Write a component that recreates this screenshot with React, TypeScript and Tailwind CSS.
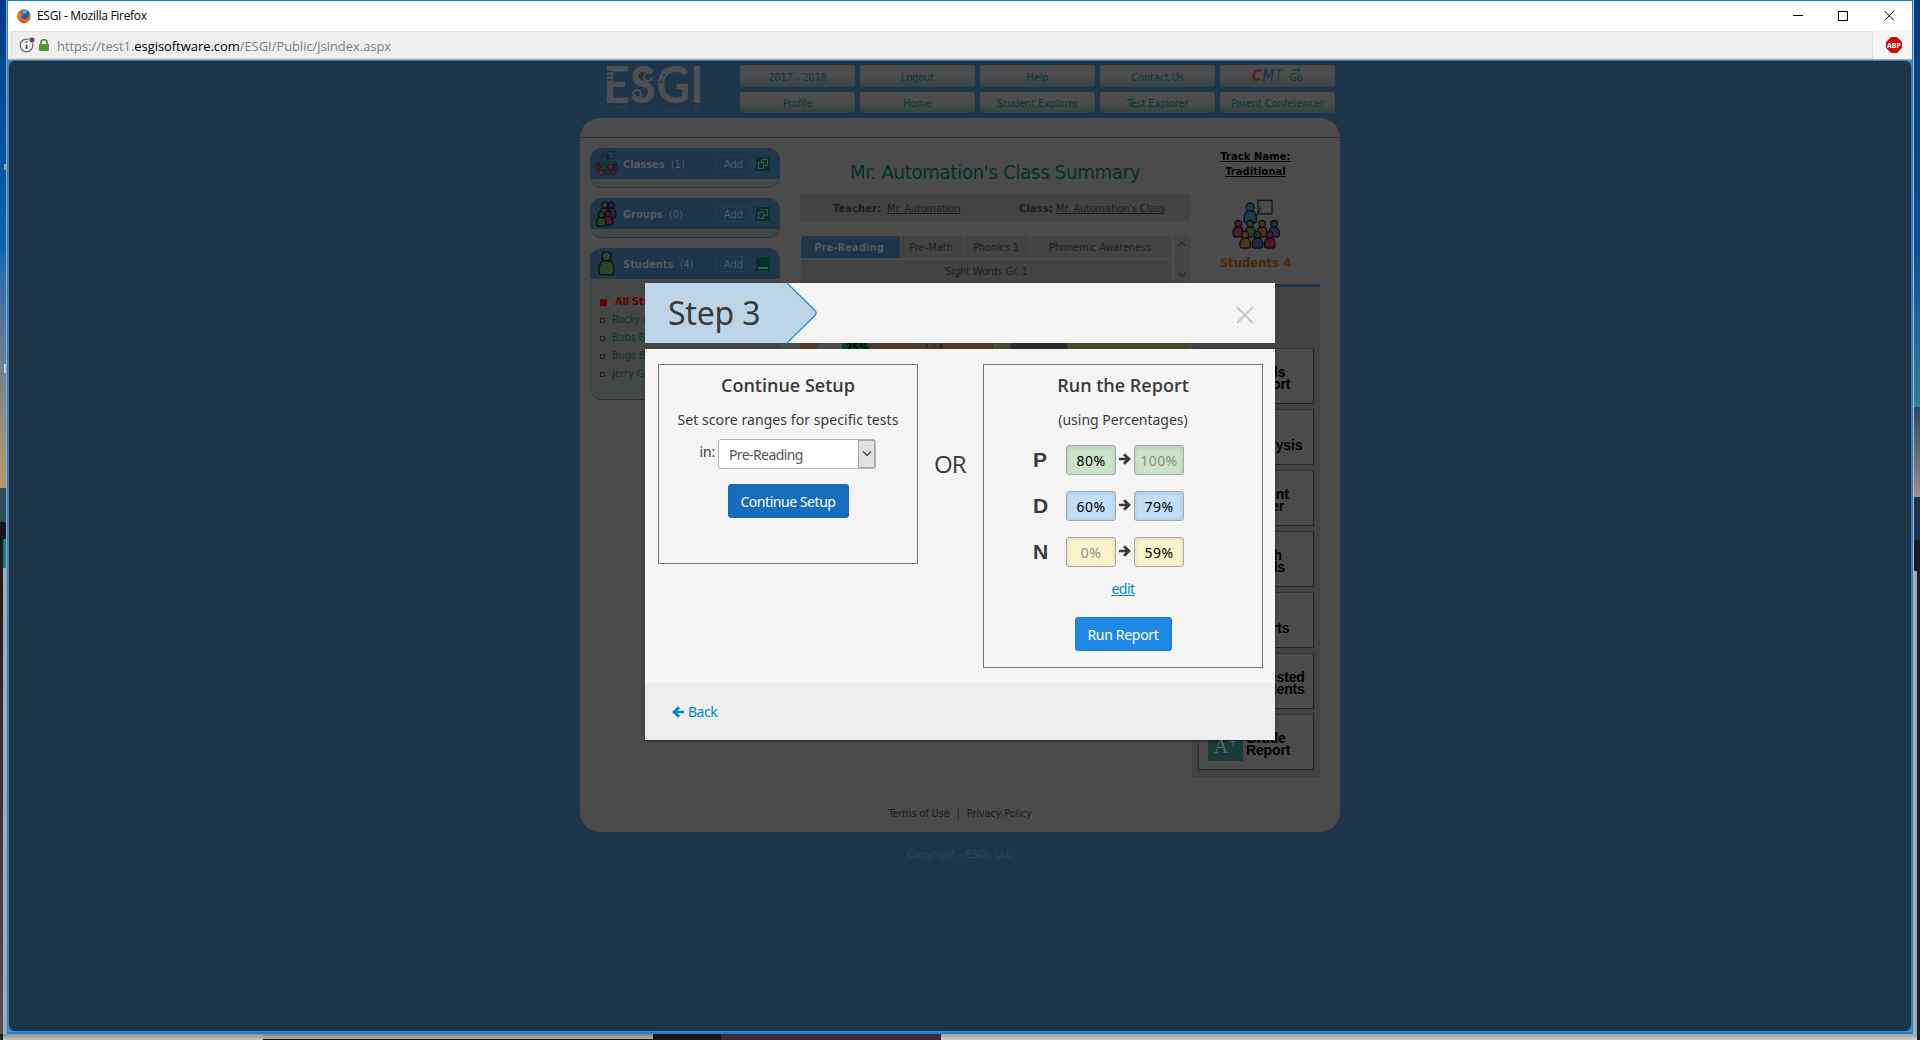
import React from "react";

type PersonProps = { x: number; y: number; h: number; w: number; r: number; fill: string; line?: string; sw?: number };

function Person({ x, y, h, w, r, fill, line = "#0d0d0d", sw = 4 }: PersonProps) {
  const top = y + r;
  const b = top + h;
  const hw = w / 2;
  return (
    <g fill={fill} stroke={line} strokeWidth={sw}>
      <path
        d={`M${x - hw} ${b - 8} C${x - hw} ${top + 2} ${x - hw / 2} ${top - 2} ${x} ${top - 2} C${x + hw / 2} ${top - 2} ${x + hw} ${top + 2} ${x + hw} ${b - 8} Q${x + hw - 1} ${b} ${x + hw - 8} ${b} H${x - hw + 8} Q${x - hw + 1} ${b} ${x - hw} ${b - 8} Z`}
      />
      <circle cx={x} cy={y} r={r} />
    </g>
  );
}

const RED = "#4a1a30";
const GREEN = "#24401f";
const ORANGE = "#52301c";
const NAVY = "#24284a";
const TEAL = "#1d3c50";

function ClassroomIcon({ size, line, sw }: { size: string; line: string; sw: number }) {
  const p = { line, sw, h: 30, w: 32, r: 10 };
  return (
    <svg viewBox="-2 -2 148 152" className={size}>
      <rect x="77" y="1" width="42" height="41" fill="none" stroke={line} strokeWidth="3.5" />
      <path d="M87 22 L70 50" stroke={line} strokeWidth="3.5" />
      <Person {...p} x={53} y={21} h={37} w={38} r={12} fill={TEAL} />
      <Person {...p} x={17} y={72} fill={RED} />
      <Person {...p} x={53} y={72} fill={GREEN} />
      <Person {...p} x={89} y={72} fill={ORANGE} />
      <Person {...p} x={125} y={72} fill={NAVY} />
      <Person {...p} x={38} y={105} fill={ORANGE} />
      <Person {...p} x={75} y={105} fill={NAVY} />
      <Person {...p} x={112} y={105} fill={RED} />
    </svg>
  );
}

function GroupIcon() {
  return (
    <svg viewBox="0 0 64 78" className="h-[26px] w-[21px]">
      <Person x={46} y={12} h={30} w={28} r={9} fill={NAVY} />
      <Person x={27} y={12} h={30} w={28} r={9} fill={ORANGE} />
      <Person x={37} y={38} h={26} w={28} r={9} fill={RED} />
      <Person x={16} y={41} h={26} w={28} r={9} fill={GREEN} />
    </svg>
  );
}

function StudentIcon() {
  return (
    <svg viewBox="0 0 52 76" className="h-[25px] w-[17px]">
      <Person x={26} y={16} h={42} w={46} r={14} fill="#2b4729" sw={4} />
    </svg>
  );
}

function Arrow({ className }: { className: string }) {
  return (
    <svg viewBox="0 0 12 12" className={className} fill="currentColor">
      <path d="M0 4.700h6.600L4 2.200 5.900.2 12 6 5.900 11.800 4 9.800 6.600 7.300H0z" />
    </svg>
  );
}

function SquareButton({ kind }: { kind: "window" | "minimize" }) {
  return (
    <svg viewBox="0 0 16 16" className="h-4 w-4">
      <rect width="16" height="16" rx="1" fill="#06302c" />
      <rect x="0.5" y="0.5" width="15" height="15" rx="1" fill="none" stroke="#1f3d3b" strokeDasharray="13 2" />
      {kind === "window" ? (
        <g fill="#06302c" stroke="#3f5350">
          <path d="M6.5 3.5 H12.5 V9.5 H9" fill="none" />
          <path d="M6.5 3.5 V6" fill="none" />
          <rect x="3.5" y="6.5" width="5" height="6" />
        </g>
      ) : (
        <rect x="3" y="11" width="10" height="2" fill="#3c5b57" />
      )}
    </svg>
  );
}

function SideCard(props: { title: string; count: number; icon: React.ReactNode; kind: "window" | "minimize"; children?: React.ReactNode }) {
  return (
    <section className="overflow-hidden rounded-[12px] border-b border-[#1f3549] bg-[#454745]">
      <header className="flex h-[31px] items-center bg-[#1f3549] pr-[9px] text-[11px] leading-[14px] text-[#565b5e]">
        <span className="flex w-[33px] items-center justify-center">{props.icon}</span>
        <span className="mt-[2px] font-bold">{props.title}</span>
        <span className="mt-[2px] ml-1.5">({props.count})</span>
        <span className="ml-auto mr-1 flex h-4 w-[35px] items-center justify-center rounded-[2px] border border-[#263f4c] pt-[2px] text-[#4c5b65]">Add</span>
        <SquareButton kind={props.kind} />
      </header>
      {props.children ?? <div className="h-2" />}
    </section>
  );
}

function Logo() {
  return (
    <svg viewBox="0 0 100 53" className="h-[53px] w-[100px] overflow-visible">
      <defs>
        <linearGradient id="fade" x1="0" y1="0" x2="0" y2="1">
          <stop offset="0" stopColor="#1f3549" stopOpacity="0.75" />
          <stop offset="1" stopColor="#1f3549" />
        </linearGradient>
      </defs>
      <text x="-3" y="38" textLength="101" lengthAdjust="spacingAndGlyphs" fill="#4e4f50" fontFamily="Lato" fontWeight="700" fontSize="52">
        ESGI
      </text>
      <g fill="none" stroke="#4e4f50" strokeWidth="2.2">
        <path d="M46 12 a4 4 0 1 1 -4 -4" />
        <path d="M27 29 a4 4 0 1 1 4 4" />
      </g>
      <g fill="#1f3549">
        <circle cx="55" cy="17" r="1.3" />
        <circle cx="58" cy="10" r="1.3" />
        <path d="M0 6h6v1.500H0zM0 10h6v1.500H0zM0 14h6v1.500H0z" />
      </g>
      <path d="M4 41h17v3H4v6h-3v-9zM29 44q8-5 15 0v8h-3v-6q-5-3-9 0zM55 46q10-8 23 0v6h-4v-4q-7-5-14 0zM88 41h6v11h-5z" fill="#4e4f50" />
      <rect y="40.500" width="100" height="12" fill="url(#fade)" />
    </svg>
  );
}

const navCell =
  "flex items-center justify-center rounded-[3px] bg-linear-to-b from-[#4c4c4c] from-50% to-[#33433f] text-[11px] leading-[14px] tracking-[-0.15px] text-[#073a37]";

function Nav() {
  return (
    <nav className="grid grid-cols-[repeat(5,115px)] grid-rows-[22px_21px] gap-[5px]">
      {["2017 - 2018", "Logout", "Help", "Contact Us"].map((t) => (
        <div key={t} className={navCell}>
          <span className="mt-[3px]">{t}</span>
        </div>
      ))}
      <div className={navCell}>
        <span className="text-[15px] tracking-[0.6px] italic">
          <span className="font-bold text-[#5f1b20]">C</span>
          <span className="text-[#1c2c55]">M</span>
          <span className="text-[#1f4224]">T</span>
        </span>
        <span className="relative mt-[3px] ml-[6px]">
          Go
          <svg viewBox="0 0 10 4" className="absolute -top-[3px] left-px h-1 w-[10px]">
            <path d="M0 2h9M7 .5l2 1.500-2 1.500" stroke="#073a37" fill="none" />
          </svg>
        </span>
      </div>
      {["Profile", "Home", "Student Explorer", "Test Explorer", "Parent Conferencer"].map((t) => (
        <div key={t} className={navCell}>
          <span className="mt-[2px]">{t}</span>
        </div>
      ))}
    </nav>
  );
}

function Sidebar() {
  return (
    <aside className="flex w-[190px] flex-col gap-[10px] pt-[10px]">
      <SideCard title="Classes" count={1} kind="window" icon={<ClassroomIcon size="h-[25px] w-[24px]" line="#10161d" sw={3} />} />
      <SideCard title="Groups" count={0} kind="window" icon={<GroupIcon />} />
      <SideCard title="Students" count={4} kind="minimize" icon={<StudentIcon />}>
        <ul className="h-[120px] pt-[14px] pl-[10px] text-[11px] leading-[18px] tracking-[-0.2px] text-[#0a3735]">
          <li className="flex items-center font-bold text-[#5c0507]">
            <span className="mr-2 h-[7px] w-[7px] bg-[#5c0507]" />
            All Students
          </li>
          {["Rocky Balboa", "Babs Bunny", "Bugs Bunny", "Jerry Garcia"].map((n) => (
            <li key={n} className="flex items-center">
              <span className="mr-[7px] h-[5px] w-[5px] border border-[#202020]" />
              {n}
            </li>
          ))}
        </ul>
      </SideCard>
    </aside>
  );
}

function Chevron({ d }: { d: string }) {
  return (
    <svg viewBox="0 0 8 6" className="h-[6px] w-2">
      <path d={d} fill="none" stroke="#303030" strokeWidth="1.700" />
    </svg>
  );
}

function Summary() {
  const tab = "flex h-[22px] items-center justify-center rounded-t-[3px] bg-[#434343] pt-[2px]";
  return (
    <main className="ml-5 flex w-[390px] flex-col text-[11px] leading-[14px] tracking-[-0.16px] text-[#1f1f1f]">
      <h1 className="mt-[20px] text-center text-[20px] leading-[28px] tracking-[-0.24px] text-[#06302e]">Mr. Automation's Class Summary</h1>
      <div className="mt-2 flex h-[27px] items-center bg-[#434343] pt-[2px] pl-[33px]">
        <b className="w-[54px] tracking-[0.15px]">Teacher:</b>
        <span className="w-[132px] underline">Mr. Automation</span>
        <b className="w-[37px] tracking-[0.15px]">Class:</b>
        <span className="underline">Mr. Automation's Class</span>
      </div>
      <div className="mt-[15px] flex">
        <div className="ml-px flex w-[371px] flex-col gap-[2px]">
          <div className="flex gap-px">
            <div className="flex h-[22px] w-[99px] items-center justify-center rounded-t-[3px] bg-[#1f3549] pt-[2px] pr-[3px] font-bold tracking-[0.1px] text-[#565b5e]">Pre-Reading</div>
            <div className={tab + " w-[63px] pr-[3px] tracking-[0px]"}>Pre-Math</div>
            <div className={tab + " w-[65px] pr-[3px]"}>Phonics 1</div>
            <div className={tab + " w-[141px] pr-[3px]"}>Phonemic Awareness</div>
          </div>
          <div className="flex h-[24px] items-center justify-center rounded-t-[3px] bg-[#434343]">Sight Words Gr. 1</div>
        </div>
        <div className="ml-[2px] flex h-[48px] w-4 flex-col items-center justify-between bg-[#454545] pt-[5px] pb-[6px]">
          <Chevron d="M0.500 5 L4 1.500 L7.500 5" />
          <Chevron d="M0.500 1 L4 4.500 L7.500 1" />
        </div>
      </div>
      <div className="mt-[50px] flex h-[40px] gap-[2px] text-[10px]">
        <div className="flex w-[194px] bg-[#4e3a2b]">
          <div className="w-[14px]" />
          <div className="w-[28px] rounded-tl-[24px] bg-[#4b4b4b]" />
          <div className="w-[30px] rounded-tr-[24px] bg-[#06401f] pt-[8px] text-center leading-[12px] font-bold text-black">25%</div>
          <div className="ml-[52px] pt-[9px] leading-[12px]">1 / 4</div>
        </div>
        <div className="flex w-[194px] bg-[#484a29]">
          <div className="ml-[14px] w-[58px] rounded-t-[16px] bg-[#2b2b2b]" />
        </div>
      </div>
    </main>
  );
}

const reports: [string, string][] = [
  ["Totals", "Report"],
  ["Item", "Analysis"],
  ["Parent", "Letter"],
  ["Flash", "Cards"],
  ["Pie", "Charts"],
  ["Untested", "Students"],
  ["Grade", "Report"],
];

function RightColumn() {
  return (
    <aside className="ml-[2px] flex w-[128px] flex-col">
      <div className="mt-[11px] pr-px text-center text-[11px] leading-[15px] font-bold tracking-[0.1px] text-black">
        <div className="underline">Track Name:</div>
        <div className="underline">Traditional</div>
      </div>
      <div className="mt-[20px] flex justify-center">
        <ClassroomIcon size="h-[51px] w-[49px]" line="#101010" sw={4} />
      </div>
      <div className="mt-[4px] pr-px text-center text-[13px] leading-[18px] font-bold text-[#4c2a05]">Students 4</div>
      <div className="mt-[12px] h-[493px] border-t-[3px] border-[#1f3549] bg-[#434343] pt-[61px] pl-[6px]">
        <div className="flex flex-col gap-[5px]">
          {reports.map(([a, b]) => (
            <div key={a} className="flex h-[56px] w-[116px] border border-t-[#333] border-r-[#242424] border-b-[#242424] border-l-[#333] bg-[#4b4b4b]">
              <div className="flex w-[46px] shrink-0 items-start justify-end pt-[11px] pr-[2px]">
                {a === "Grade" && (
                  <div className="flex h-[35px] w-[35px] items-center justify-center bg-[#1a3b37] pt-1 font-['Liberation_Serif',serif] text-[20px] text-[#626b69]">
                    <span>A</span>
                    <span className="-mt-2 text-[16px]">+</span>
                  </div>
                )}
              </div>
              <div className="pt-[17px] pl-px font-['Liberation_Sans',sans-serif] text-[14px] leading-[12.300px] font-bold tracking-[-0.15px] text-black">
                {a}
                <br />
                {b}
              </div>
            </div>
          ))}
        </div>
      </div>
    </aside>
  );
}

const input = "flex h-[30px] w-[50px] items-center justify-center rounded-[3px] border border-[#a9adaa] pt-[2px] text-[14px] tracking-[0.4px] inset-shadow-[0_1px_4px_rgba(0,0,0,0.12)]";

function ScoreRow(props: { label: string; from: string; to: string; fromClass: string; toClass: string }) {
  return (
    <div className="flex h-[30px] items-center pl-[47px]">
      <span className="w-[35px] pl-[2px] font-['Liberation_Sans',sans-serif] text-[21px] leading-[24px] font-bold">{props.label}</span>
      <div className={input + " " + props.fromClass}>{props.from}</div>
      <Arrow className="mx-[3px] mb-[3px] h-3 w-3" />
      <div className={input + " " + props.toClass}>{props.to}</div>
    </div>
  );
}

function Dialog() {
  return (
    <div role="dialog" className="absolute top-[223px] left-[637px] w-[630px] font-['Noto_Sans',sans-serif] text-[14px] leading-5 text-[#3a3a3a]">
      <header className="flex h-[60px] items-center justify-between bg-[#f5f5f5] pr-[21px]">
        <div className="relative flex h-full w-[173px] items-center pl-[23px]">
          <svg viewBox="0 0 173 60" className="absolute inset-0 h-[60px] w-[173px]">
            <path d="M0 0H142L170.500 28Q171.800 30 170.500 32L142 60H0Z" fill="#bcd4e6" />
            <path d="M142 0L170.500 28Q171.800 30 170.500 32L142 60" fill="none" stroke="#1a8fd0" strokeWidth="1.200" />
          </svg>
          <h2 className="relative text-[32px] leading-[40px] tracking-[-0.2px]">Step 3</h2>
        </div>
        <svg viewBox="0 0 18 18" className="mt-[4px] h-[18px] w-[18px]">
          <path d="M1 1L17 17M17 1L1 17" stroke="#c9c9c9" strokeWidth="2.200" />
        </svg>
      </header>
      <div className="mt-[6px] shadow-[0_1px_2px_rgba(0,0,0,0.5)]">
        <div className="flex h-[334px] items-start bg-[#f5f5f5] pt-[15px] pr-[12px] pl-[13px]">
          <section className="flex h-[200px] w-[260px] shrink-0 flex-col items-center border border-[#777]">
            <h3 className="mt-[8px] font-['Open_Sans'] text-[18px] leading-6 font-semibold">Continue Setup</h3>
            <p className="mt-[13px] tracking-[0.07px]">Set score ranges for specific tests</p>
            <div className="mt-[9px] flex w-full">
              <span className="mt-[3px] w-[59px] pr-[3px] text-right tracking-[-0.2px]">in:</span>
              <div className="flex h-[30px] w-[158px] rounded-[3px] border border-[#b5b5b5] bg-white">
                <span className="mt-[5px] grow pl-[10px] tracking-[-0.6px] text-[#555]">Pre-Reading</span>
                <span className="flex w-[17px] items-center justify-center border border-[#a8a8a8] bg-[#e1e1e1]">
                  <svg viewBox="0 0 10 6" className="h-[6px] w-[10px]">
                    <path d="M1 .5L5 4.500L9 .5" fill="none" stroke="#444" strokeWidth="1.300" />
                  </svg>
                </span>
              </div>
            </div>
            <div className="mt-[15px] flex h-[34px] w-[121px] items-center justify-center rounded-[3px] border border-[#1668b4] bg-[#176dbd] pt-[2px] tracking-[-0.45px] text-white">Continue Setup</div>
          </section>
          <div className="mt-[83px] ml-[16px] w-[49px] shrink-0 font-['Open_Sans'] text-[24px] leading-[34px] tracking-[-1px]">OR</div>
          <section className="flex h-[304px] w-[280px] shrink-0 flex-col items-center border border-[#777]">
            <h3 className="mt-[8px] font-['Open_Sans'] text-[18px] leading-6 font-semibold">Run the Report</h3>
            <p className="mt-[13px]">(using Percentages)</p>
            <div className="mt-[15px] flex w-full flex-col gap-4">
              <ScoreRow label="P" from="80%" to="100%" fromClass="bg-[#cce3cc] text-black" toClass="bg-[#cce3cc] text-[#8a8f8a]" />
              <ScoreRow label="D" from="60%" to="79%" fromClass="bg-[#c2def8] text-black" toClass="bg-[#c2def8] text-black" />
              <ScoreRow label="N" from="0%" to="59%" fromClass="bg-[#faf4cb] text-[#8f8d80]" toClass="bg-[#faf4cb] text-black" />
            </div>
            <a className="mt-[12px] tracking-[-0.5px] text-[#0088cc] underline">edit</a>
            <div className="mt-[18px] flex h-[34px] w-[97px] items-center justify-center rounded-[3px] border border-[#1a7bd0] bg-[#1e88e5] pt-[2px] tracking-[-0.3px] text-white">Run Report</div>
          </section>
        </div>
        <footer className="flex h-[57px] items-center bg-[#eee] pl-[27px] tracking-[-0.5px] text-[#0088cc]">
          <Arrow className="mt-px mr-1 h-3 w-3 rotate-180" />
          Back
        </footer>
      </div>
    </div>
  );
}

function TitleBar() {
  return (
    <div className="flex h-[30px] items-center bg-white pl-[9px] font-['Open_Sans',sans-serif] text-[12px] tracking-[-0.3px] text-black">
      <svg viewBox="0 0 14 14" className="mr-[6px] h-[14px] w-[14px]">
        <circle cx="7" cy="7" r="6.800" fill="#e66a12" />
        <circle cx="7.500" cy="5.500" r="4.800" fill="#1f5fae" />
        <path d="M5.500 1.500q3-1 5 1l-2 2-3 0z" fill="#5db4e8" />
        <path d="M.5 4Q0 12 7 13.800Q13 13.500 13.800 7Q13 11 9 11Q4 10.500 4.500 7L6.500 6.500L4.500 4.500L3 2Z" fill="#e8701a" />
        <path d="M1 9Q4 13 10 13Q7 14.500 4 13Z" fill="#c62b16" />
        <path d="M12.500 4q1.500 3-.5 6q1-3 .5-6" fill="#fbc62e" />
      </svg>
      ESGI - Mozilla Firefox
      <svg viewBox="0 0 102 12" className="mr-[17px] ml-auto h-3 w-[102px]" fill="none" stroke="#000">
        <path d="M0 5.500H10" />
        <rect x="45.500" y="1.500" width="9" height="9" />
        <path d="M91.500 1l9.500 9.500M101 1l-9.500 9.500" />
      </svg>
    </div>
  );
}

function UrlBar() {
  return (
    <div className="flex h-[29px] border-b border-[#adadad] bg-[#f5f5f5] pl-[3px]">
      <div className="flex w-[1862px] items-center border border-[#dedede] bg-[#efefef] pl-[7px] font-['Open_Sans',sans-serif] text-[13px] tracking-[-0.05px] text-[#808080]">
        <svg viewBox="0 0 16 16" className="h-4 w-4">
          <circle cx="7.500" cy="8.500" r="6.300" fill="none" stroke="#6b6b6b" strokeWidth="1.300" />
          <path d="M7.500 7.500v4.500M7.500 4.500v1.500" stroke="#555" strokeWidth="1.800" />
          <circle cx="13" cy="3" r="3" fill="#555" stroke="#efefef" strokeWidth="0.800" />
        </svg>
        <svg viewBox="0 0 10 12" className="mr-[9px] ml-[4px] h-3 w-[10px]">
          <rect y="5" width="10" height="7" rx="1" fill="#4f9b24" />
          <path d="M2 6V3.500a3 2.800 0 0 1 6 0V6" fill="none" stroke="#4f9b24" strokeWidth="1.800" />
        </svg>
        <span className="mt-[3px] -ml-px">
          https://test1.<span className="text-black">esgisoftware.com</span>/ESGI/Public/jsindex.aspx
        </span>
      </div>
      <svg viewBox="0 0 16 16" className="mt-[6px] ml-[13px] h-4 w-4">
        <path d="M5 0h6l5 5v6l-5 5H5l-5-5V5z" fill="#c70d0d" />
        <text x="8" y="10.800" textAnchor="middle" fontSize="7" fontWeight="700" fontFamily="Open Sans" fill="#fff">ABP</text>
      </svg>
    </div>
  );
}

function LeftDesktop() {
  return (
    <div className="flex w-[6px] flex-col">
      <div className="flex h-[488px] flex-col items-end bg-linear-to-b from-[#043a80] via-[#0e62ac] via-50% to-[#b59a68]">
        <div className="mt-[164px] h-[6px] w-[2px] bg-[#a89f78]" />
        <div className="mt-[194px] h-[9px] w-[2px] bg-[#c8c8c8]" />
      </div>
      <div className="h-[34px] bg-[#2f4a58]" />
      <div className="flex grow bg-linear-to-b from-[#15151c] via-[#2e3444] to-[#4d5060]">
        <div className="mt-[17px] ml-auto w-[3px] bg-[#aaa]">
          <div className="h-[29px] bg-[#12806a]" />
        </div>
      </div>
    </div>
  );
}

function RightDesktop() {
  return (
    <div className="flex w-[6px] flex-col">
      <div className="h-[407px] bg-linear-to-b from-[#053a80] via-[#0a4f98] via-60% to-[#2f7f96]" />
      <div className="h-[90px] bg-linear-to-b from-[#2a4a68] to-[#a08c80]" />
      <div className="h-[43px] bg-[#1d3450]" />
      <div className="h-[31px] bg-[#1c1a1e]" />
      <div className="grow bg-linear-to-r from-[#a8a8a8] from-50% to-[#1b2030] to-50%" />
    </div>
  );
}

export default function App() {
  return (
    <div className="flex h-[1040px] w-[1920px] flex-col overflow-hidden bg-[#1b1f2a]">
      <div className="flex h-[1034px]">
        <LeftDesktop />
        <div className="w-px bg-[#a9a9a9]" />
        <div className="flex w-[1906px] flex-col border border-[#1a7fd6]">
          <TitleBar />
          <UrlBar />
          <div className="flex grow flex-col bg-[#3d8fdc] px-px pb-px">
            <div className="relative -mx-px grow rounded-[6px] border-x border-t border-[#3d7db8] bg-[#1f3549] bg-clip-padding font-['DejaVu_Sans_Condensed','DejaVu_Sans',sans-serif]">
              <div className="mx-auto -mt-px w-[760px]">
                <div className="flex h-[58px] pt-[5px] pl-[26px]">
                  <div className="w-[134px]">
                    <Logo />
                  </div>
                  <Nav />
                </div>
                <div className="flex h-[714px] flex-col rounded-[20px] bg-[#4b4b4b]">
                  <div className="h-5 border-b border-[#333]" />
                  <div className="flex grow pl-[10px]">
                    <Sidebar />
                    <Summary />
                    <RightColumn />
                  </div>
                  <div className="flex h-[25px] justify-center gap-[7px] text-[11px] leading-[14px] tracking-[-0.17px] text-[#1d1d1d]">
                    <span>Terms of Use</span>
                    <span>|</span>
                    <span>Privacy Policy</span>
                  </div>
                </div>
                <div className="mt-[16px] text-center text-[11px] leading-[14px] text-[#334450]">Copyright - ESGI, LLC</div>
              </div>
              <div className="absolute -top-px -left-px">
                <Dialog />
              </div>
            </div>
          </div>
          <div className="h-px bg-[#1a7fd6]" />
        </div>
        <div className="w-px bg-[#b9b9b9]" />
        <RightDesktop />
      </div>
      <div className="flex h-[6px]">
        <div className="w-[3px]" />
        <div className="w-[260px] bg-linear-to-b from-[#8f8f8f] to-[#c4c2be]" />
        <div className="w-[390px] border-b border-[#1a1a1a] bg-linear-to-b from-[#858585] to-[#b4aea8]" />
        <div className="w-[68px] bg-[#1b151a]" />
        <div className="w-[220px] bg-[#3e2a36]" />
        <div className="w-[976px] bg-linear-to-b from-[#9c9c9c] to-[#d0d0d0]" />
      </div>
    </div>
  );
}
